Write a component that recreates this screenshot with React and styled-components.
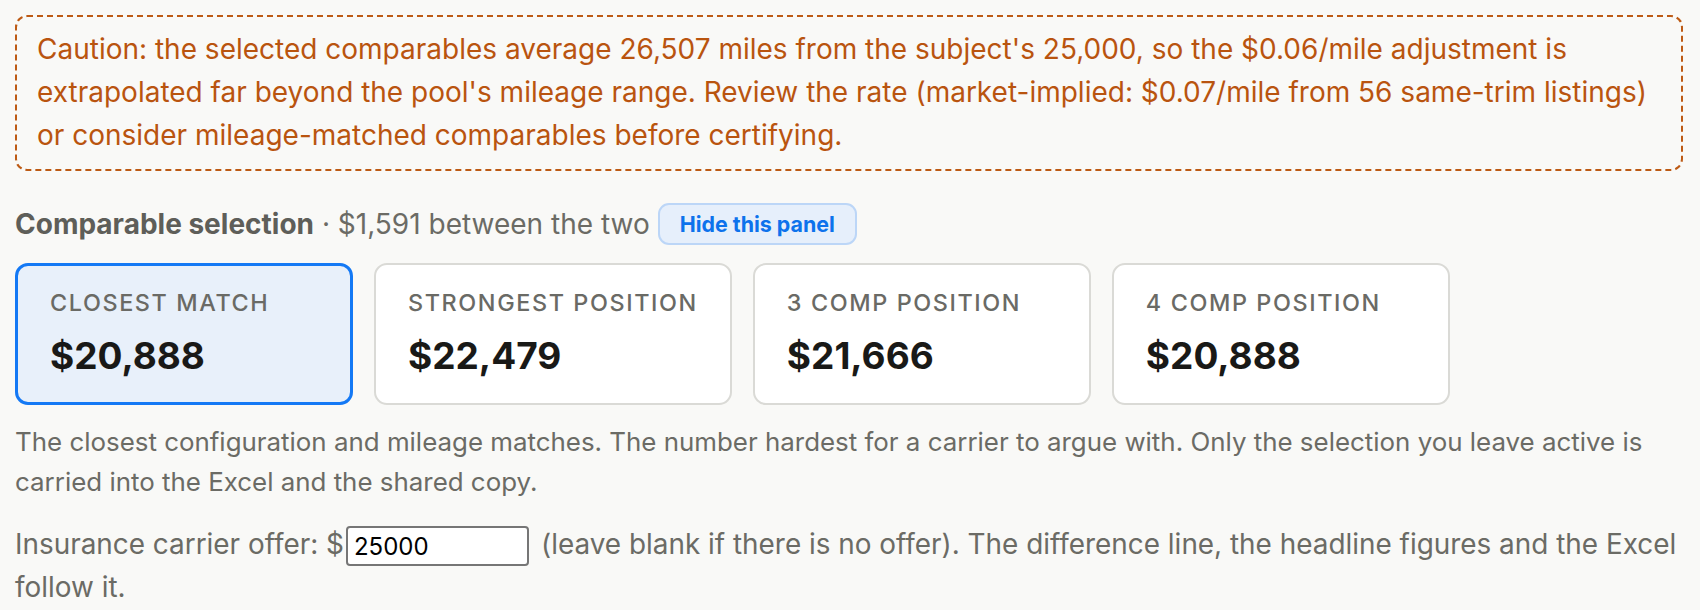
import React, { useState } from "react";
import styled, { createGlobalStyle } from "styled-components";

const GlobalStyle = createGlobalStyle`
  html, body {
    margin: 0;
    padding: 0;
    background: #f9f9f7;
  }
  body {
    font-family: Inter, "Noto Sans", "Liberation Sans", sans-serif;
    color: #6b6b65;
  }
`;

const Page = styled.div`
  padding: 15px 17px 15px 15px;
`;

const Caution = styled.div`
  border: 2px dashed #bd5a14;
  border-radius: 12px;
  padding: 11px 20px 12px;
  color: #b9540f;
  font-size: 28px;
  line-height: 43px;
`;

const HeaderRow = styled.div`
  display: flex;
  align-items: center;
  gap: 8px;
  margin-top: 32px;
  font-size: 28px;
  color: #6b6b65;
`;

const Strong = styled.strong`
  font-weight: 700;
  color: #5e5e59;
`;

const PillButton = styled.button`
  font-family: inherit;
  font-size: 21.4px;
  font-weight: 700;
  color: #0d72ec;
  background: #e6effb;
  border: 2px solid #bcd6f7;
  border-radius: 11px;
  height: 42px;
  padding: 0 20px;
  cursor: pointer;
`;

const Cards = styled.div`
  display: flex;
  gap: 21px;
  margin-top: 18px;
`;

const Card = styled.button`
  box-sizing: border-box;
  min-width: 338px;
  height: 142px;
  text-align: left;
  font-family: inherit;
  padding: 0 32px;
  border-radius: 13px;
  border: ${({ $active }) => ($active ? "3px solid #1479f5" : "2px solid #dadad6")};
  background: ${({ $active }) => ($active ? "#e8f0fa" : "#ffffff")};
  display: flex;
  flex-direction: column;
  justify-content: center;
  cursor: pointer;
`;

const Label = styled.div`
  font-size: 23.4px;
  font-weight: 500;
  letter-spacing: 1.6px;
  text-transform: uppercase;
  color: #6a6a65;
  line-height: 28px;
`;

const Value = styled.div`
  font-size: 37px;
  font-weight: 700;
  color: #191917;
  line-height: 46px;
  margin-top: 16px;
`;

const Note = styled.p`
  margin: 17px 0 0;
  font-size: 25.9px;
  line-height: 40px;
`;

const OfferLine = styled.p`
  margin: 21px 0 0;
  font-size: 27.9px;
  line-height: 43px;
`;

const OfferInput = styled.input`
  box-sizing: border-box;
  width: 183px;
  height: 40px;
  margin: 0 12px 0 2px;
  padding: 0 6px;
  font-family: inherit;
  font-size: 24px;
  color: #000;
  background: #fff;
  border: 2px solid #767676;
  border-radius: 4px;
  vertical-align: middle;
`;

const options = [
  { key: "closest", label: "Closest match", value: "$20,888" },
  { key: "strongest", label: "Strongest position", value: "$22,479" },
  { key: "three", label: "3 comp position", value: "$21,666" },
  { key: "four", label: "4 comp position", value: "$20,888" },
];

export default function App() {
  const [active, setActive] = useState("closest");
  const [offer, setOffer] = useState("25000");

  return (
    <>
      <GlobalStyle />
      <Page>
        <Caution>
          Caution: the selected comparables average 26,507 miles from the subject's 25,000, so the $0.06/mile
          adjustment is extrapolated far beyond the pool's mileage range. Review the rate (market-implied:
          $0.07/mile from 56 same-trim listings) or consider mileage-matched comparables before certifying.
        </Caution>

        <HeaderRow>
          <span>
            <Strong>Comparable selection</Strong> · $1,591 between the two
          </span>
          <PillButton>Hide this panel</PillButton>
        </HeaderRow>

        <Cards>
          {options.map((o) => (
            <Card key={o.key} $active={active === o.key} onClick={() => setActive(o.key)}>
              <Label>{o.label}</Label>
              <Value>{o.value}</Value>
            </Card>
          ))}
        </Cards>

        <Note>
          The closest configuration and mileage matches. The number hardest for a carrier to argue with. Only the
          selection you leave active is carried into the Excel and the shared copy.
        </Note>

        <OfferLine>
          Insurance carrier offer: $
          <OfferInput value={offer} onChange={(e) => setOffer(e.target.value)} />
          (leave blank if there is no offer). The difference line, the headline figures and the Excel follow it.
        </OfferLine>
      </Page>
    </>
  );
}
